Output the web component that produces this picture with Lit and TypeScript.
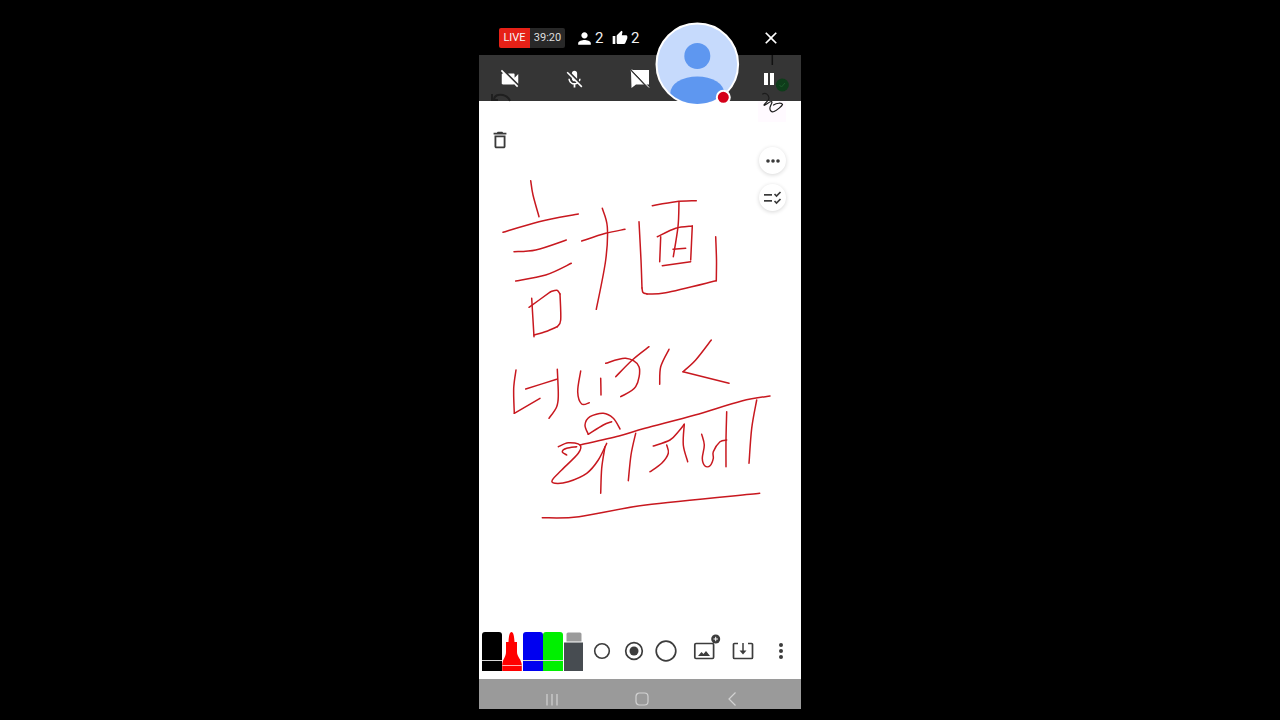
import { LitElement, html, css, svg } from "lit";
import { customElement } from "lit/decorators.js";

type P = number[];
const STROKES: P[] = [
  [530.7,180.7,533,195,539,216.7],
  [503,232.3,539,221.7,578.3,214],
  [514,251.7,535.7,250,566.3,240],
  [515.7,281,545.7,275,571.3,263.3],
  [531.7,298.3,534,336.7],
  [529,307.3,550.7,291.7],
  [550.7,291.7,557,290.2,560,294],
  [560,294,560.7,320,557.3,326.7],
  [557.3,326.7,546,331.5,534,335],
  [602.3,208.3,607.3,226.7,605.7,260,596.3,309.3],
  [581.7,241,605.7,233.3,625,229.3],
  [639,221.7,641,260,642,288],
  [642,288,643,292.5,647,294],
  [647,294,665.7,292.7,716.3,280.7],
  [716.3,280.7,716.5,260,715.7,236.7],
  [652.3,205.7,675.7,201.7,696.3,200.7],
  [679,201.7,678,226.7,673.3,256.7],
  [657.3,236.7,675.7,228.3,692.3,226],
  [660.7,236.7,659.7,261.7],
  [692.3,226,690.7,260],
  [662.3,265.7,690.7,261.7],
  [673,249.3,685.7,248.3],
  [516,370,513.7,388.3,514.3,413.3],
  [514.3,413.3,540,398.3],
  [525.7,389,556.7,379.3],
  [557.3,369.3,558.3,395,556.7,406.7,549,418.3],
  [580.7,371,577.7,391.7,581.7,404,589.3,402.7],
  [600.7,378.3,601,395],
  [605.7,363.3,625.7,358.3,639,366.7,635.7,386.7,620.7,396.7],
  [615.7,376.7,632.3,360,649,346.7],
  [669,349.3,660.7,366.7,659.7,384.3],
  [711.3,340,695.7,360,683,371.7],
  [683,371.7,729,383.3],
  [580,445,619,436,645,428.3,695,415,741.7,401,770,396],
  [620,429,613.3,418.3,603.3,413.3,590,416.7,585,425,588.3,434.3],
  [588.3,434.3,603.3,425,611.7,421.7],
  [558.3,446.7,568.3,442.7,580,445,578.3,453.3,561.7,470,552.3,480,555,483.3,568.3,481.7,586.7,473.3,598.3,460,606.7,443.3],
  [576.7,446.7,566.7,448.3,562.3,451.7,566.7,455],
  [605,446.7,601.7,468.3,600.7,493.3],
  [635.7,433.3,631,455,628.3,480.7],
  [653.3,446,670,440,678.3,431.7,684.3,424.3],
  [684.3,424.3,683.3,445,687.7,461.7],
  [666.7,445,668.3,453.3,661.7,463.3,650,471.7],
  [701.7,434.3,704.3,445,702.3,458.3,705,466,710,465.7,713.3,458.3,713.3,451.7,720,441.7,726.7,440],
  [726.7,411.7,726,440,726,466.7],
  [756.7,400,751.7,428.3,749,463.3],
  [542.3,517.7,579,516.7,645.7,505,759.7,493.3],
];

function smooth(a: P): string {
  const n = a.length / 2;
  const p = (i: number) => {
    const k = Math.max(0, Math.min(n - 1, i));
    return [a[k * 2], a[k * 2 + 1]];
  };
  let d = `M${a[0]} ${a[1]}`;
  for (let i = 0; i < n - 1; i++) {
    const [x0, y0] = p(i - 1), [x1, y1] = p(i), [x2, y2] = p(i + 1), [x3, y3] = p(i + 2);
    const c1x = x1 + (x2 - x0) / 6, c1y = y1 + (y2 - y0) / 6;
    const c2x = x2 - (x3 - x1) / 6, c2y = y2 - (y3 - y1) / 6;
    d += `C${c1x.toFixed(1)} ${c1y.toFixed(1)} ${c2x.toFixed(1)} ${c2y.toFixed(1)} ${x2} ${y2}`;
  }
  return d;
}

const MARKERS = ["#000000", "#ff0000", "#0000f0", "#00f000"];

@customElement("app-root")
export class AppRoot extends LitElement {
  static styles = css`
    :host { display: flex; justify-content: center; width: 1280px; height: 720px; background: #000; overflow: hidden; font-family: Roboto, "Liberation Sans", sans-serif; }
    .phone { position: relative; width: 322px; height: 720px; display: flex; flex-direction: column; }
    .top { height: 55px; flex: none; display: flex; align-items: center; padding: 21px 0 0 20px; box-sizing: border-box; color: #fff; background: #000; }
    .badge { display: flex; height: 20px; border-radius: 2px; overflow: hidden; font-size: 11px; line-height: 20px; }
    .live { width: 31px; background: #e62117; text-align: center; color: #f6f6f6; }
    .time { width: 35px; background: #282828; text-align: center; color: #dedede; }
    .stat { display: flex; align-items: center; font-size: 15px; color: #f2f2f2; }
    .stat svg { fill: #fff; display: block; }
    .s1 { margin-left: 10px; gap: 1px; }
    .s2 { margin-left: 9px; gap: 2.5px; }
    .close { margin-left: auto; margin-right: 20px; fill: #fff; display: block; }
    .bar { height: 46px; flex: none; background: #353535; display: flex; align-items: center; padding-top: 2px; box-sizing: border-box; padding-right: 27px; }
    .cell { width: 61px; margin-right: 4px; display: flex; justify-content: center; }
    .cell svg { display: block; fill: #fff; }
    .pause { margin-left: auto; display: flex; gap: 2px; }
    .pause i { display: block; width: 4px; height: 12px; background: #fff; }
    .canvas { flex: 1; background: #fff; display: flex; flex-direction: column; position: relative; }
    .head { display: flex; justify-content: space-between; padding: 28px 15px 0 10px; }
    .trash { display: block; fill: #3a3a3a; }
    .side { display: flex; flex-direction: column; gap: 10px; margin-top: 18px; }
    .round { width: 27px; height: 27px; border-radius: 50%; background: #fff; box-shadow: 0 1px 4px rgba(0,0,0,.16); display: flex; align-items: center; justify-content: center; }
    .round svg { display: block; fill: #3a3a3a; }
    .tools { margin-top: auto; display: flex; align-items: flex-end; padding: 0 0 8px 3px; height: 40px; }
    .marker { display: block; width: 20px; height: 39px; margin-right: 0.4px; flex: none; }
    .tool { display: flex; align-items: center; justify-content: center; height: 38px; margin-bottom: 1px; flex: none; }
    .tool svg { display: block; fill: none; stroke: #3c3c3c; overflow: visible; }
    .nav { height: 30px; flex: none; background: #9a9a9a; display: flex; align-items: center; padding-top: 10px; box-sizing: border-box; }
    .navi { display: flex; align-items: center; justify-content: center; flex: none; }
    .navi svg { display: block; fill: none; stroke: #d2d2d2; stroke-width: 1.2; }
    .foot { height: 11px; flex: none; background: #000; }
    .overlay { position: absolute; left: 0; top: 0; width: 322px; height: 720px; pointer-events: none; }
    .ink { fill: none; stroke: #c8181f; stroke-width: 1.5; stroke-linecap: round; stroke-linejoin: round; }
    .sq { fill: none; stroke: #1c1c1c; stroke-width: 1.2; stroke-linecap: round; stroke-linejoin: round; }
    .ghost { fill: none; stroke: #1f1f1f; stroke-width: 2; }
  `;

  private marker(c: string, i: number) {
    if (i === 1) {
      return svg`<svg class="marker" viewBox="0 0 20 39">
        <path d="M9.500 0c1.800 0 2.800 4 3 10h2.500v10c0 5 4.500 7 4.800 13v6H.2v-6C.5 27 4 25 4 20V10h2.500C6.700 4 7.700 0 9.500 0z" fill="${c}"/>
        <rect x=".2" y="33" width="19.600" height="1" fill="#ffb0b0"/>
      </svg>`;
    }
    return svg`<svg class="marker" viewBox="0 0 20 39">
      <path d="M3 0h14a3 3 0 0 1 3 3v36H0V3a3 3 0 0 1 3-3z" fill="${c}"/>
      <rect y="28" width="20" height="1" fill="#d8d8d8"/>
    </svg>`;
  }

  render() {
    return html`<div class="phone">
      <div class="top">
        <div class="badge"><div class="live">LIVE</div><div class="time">39:20</div></div>
        <div class="stat s1">
          <svg width="19" height="19" viewBox="0 0 24 24"><path d="M12 12c2.210 0 4-1.790 4-4s-1.790-4-4-4-4 1.790-4 4 1.790 4 4 4zm0 2c-2.670 0-8 1.340-8 4v2h16v-2c0-2.660-5.330-4-8-4z"/></svg>
          <span>2</span>
        </div>
        <div class="stat s2">
          <svg width="16" height="16" viewBox="0 0 24 24"><path d="M1 21h4V9H1v12zm22-11c0-1.100-.9-2-2-2h-6.310l.95-4.570.03-.32c0-.41-.17-.79-.44-1.060L14.170 1 7.590 7.590C7.220 7.950 7 8.450 7 9v10c0 1.100.9 2 2 2h9c.83 0 1.540-.5 1.840-1.220l3.020-7.050c.09-.23.14-.47.14-.73v-2z"/></svg>
          <span>2</span>
        </div>
        <svg class="close" width="20" height="20" viewBox="0 0 24 24"><path d="M19 6.410L17.590 5 12 10.590 6.410 5 5 6.410 10.590 12 5 17.590 6.410 19 12 13.410 17.590 19 19 17.590 13.410 12z"/></svg>
      </div>
      <div class="bar">
        <div class="cell"><svg width="22" height="22" viewBox="0 0 24 24"><path d="M21 6.500l-4 4V7c0-.55-.45-1-1-1H9.820L21 17.180V6.500zM3.270 2L2 3.270 4.730 6H4c-.55 0-1 .45-1 1v10c0 .55.45 1 1 1h12c.21 0 .39-.08.54-.18L19.730 21 21 19.730 3.270 2z"/></svg></div>
        <div class="cell"><svg width="21" height="21" viewBox="0 0 24 24"><path d="M19 11h-1.700c0 .74-.16 1.430-.43 2.050l1.230 1.230c.56-.98.9-2.090.9-3.280zm-4.020.17c0-.06.02-.11.02-.17V5c0-1.660-1.340-3-3-3S9 3.340 9 5v.18l5.980 5.990zM4.270 3L3 4.270l6.010 6.010V11c0 1.660 1.330 3 2.990 3 .22 0 .44-.03.65-.08l1.660 1.660c-.71.33-1.500.52-2.310.52-2.760 0-5.300-2.100-5.300-5.100H5c0 3.410 2.720 6.230 6 6.720V21h2v-3.280c.91-.13 1.770-.45 2.540-.9L19.730 21 21 19.730 4.270 3z"/></svg></div>
        <div class="cell"><svg width="20" height="20" viewBox="0 0 20 20"><path d="M1 3.500L.5 1h18.500v14.500H6L1.500 19z"/><path d="M.5 .5L17.500 18.500" stroke="#353535" stroke-width="1.500"/><path d="M2 .5L19 18.500" stroke="#fff" stroke-width="1"/></svg></div>
        <div class="pause"><i></i><i></i></div>
      </div>
      <div class="canvas">
        <div class="head">
          <svg class="trash" width="22" height="22" viewBox="0 0 24 24"><path d="M16 9v10H8V9h8m-1.500-6h-5l-1 1H5v2h14V4h-3.500l-1-1zM18 7H6v12c0 1.100.9 2 2 2h8c1.100 0 2-.9 2-2V7z"/></svg>
          <div class="side">
            <div class="round"><svg width="16" height="6" viewBox="0 0 16 6"><circle cx="3" cy="3" r="1.800"/><circle cx="8" cy="3" r="1.800"/><circle cx="13" cy="3" r="1.800"/></svg></div>
            <div class="round"><svg width="20" height="14" viewBox="0 0 20 14"><rect x="1" y="3" width="8" height="1.700"/><rect x="1" y="9" width="8" height="1.700"/><path d="M11.500 3l2 2 4-4M11.500 10l2 2 4-4" fill="none" stroke="#3a3a3a" stroke-width="1.700"/></svg></div>
          </div>
        </div>
        <div class="tools">
          ${MARKERS.map((c, i) => this.marker(c, i))}
          <svg class="marker" viewBox="0 0 20 39">
            <path d="M2.500 2a1.500 1.500 0 0 1 1.500-1.500h12a1.500 1.500 0 0 1 1.500 1.500V9.500H2.500z" fill="#9b9b9b"/>
            <rect y="10.500" width="19" height="28.500" fill="#474c51"/>
          </svg>
          <div class="tool" style="width:36.600px"><svg width="18" height="18" viewBox="0 0 18 18"><circle cx="9" cy="9" r="7.300" stroke-width="1.600"/></svg></div>
          <div class="tool" style="width:27.400px"><svg width="20" height="20" viewBox="0 0 20 20"><circle cx="10" cy="10" r="8.300" stroke-width="1.700"/><circle cx="10" cy="10" r="4.500" fill="#3c3c3c" stroke="none"/></svg></div>
          <div class="tool" style="width:36px"><svg width="24" height="24" viewBox="0 0 24 24"><circle cx="12" cy="12" r="9.800" stroke-width="1.700"/></svg></div>
          <div class="tool" style="width:40px"><svg width="26" height="26" viewBox="0 0 26 26">
            <rect x="3.800" y="5.500" width="18.800" height="15" rx="1.200" stroke-width="1.700"/>
            <path d="M7 18l3.500-4 2 2 2.500-3 4 5z" fill="#3c3c3c" stroke="none"/>
            <circle cx="24.700" cy="1" r="4.500" fill="#3c3c3c" stroke="none"/>
            <path d="M22.500 1h4.400M24.700 -1.200v4.400" stroke="#fff" stroke-width="1"/>
          </svg></div>
          <div class="tool" style="width:37.400px"><svg width="22" height="18" viewBox="0 0 22 18">
            <path d="M6 1.500H2.500a1 1 0 0 0-1 1v13a1 1 0 0 0 1 1h17a1 1 0 0 0 1-1v-13a1 1 0 0 0-1-1H16" stroke-width="1.700"/>
            <path d="M11 1v9" stroke-width="1.500"/><path d="M7.500 8.500h7L11 12.500z" fill="#3c3c3c" stroke="none"/>
          </svg></div>
          <div class="tool" style="width:39.200px"><svg width="6" height="18" viewBox="0 0 6 18"><g fill="#3c3c3c" stroke="none"><circle cx="3" cy="3" r="2"/><circle cx="3" cy="9" r="2"/><circle cx="3" cy="15" r="2"/></g></svg></div>
        </div>
      </div>
      <div class="nav">
        <div class="navi" style="width:145px"><svg width="14" height="13" viewBox="0 0 14 13"><path d="M2 1v11.500M7 1v11.500M12 1v11.500"/></svg></div>
        <div class="navi" style="width:35px"><svg width="14" height="14" viewBox="0 0 14 14"><rect x="1" y="1" width="12" height="12" rx="3.500"/></svg></div>
        <div class="navi" style="width:146px"><svg width="10" height="16" viewBox="0 0 10 16"><path d="M8.500 1.500L2 8l6.500 6.500"/></svg></div>
      </div>
      <div class="foot"></div>

      <svg class="overlay" viewBox="479 0 322 720">
        ${STROKES.map((s) => svg`<path class="ink" d="${smooth(s)}"/>`)}
        <path class="ghost" d="M494 100c0-5 5-6 9-5 4 1 6 3 7 6M492 94v6h6"/>
        <path d="M772.300 55v10" stroke="#111" stroke-width="1.500"/>
        <circle cx="782.300" cy="85" r="6.500" fill="#0e3d1a"/>
        <path d="M779.500 85l2 2 3.500-4" fill="none" stroke="#1d5c2c" stroke-width="1"/>
        <rect x="758" y="101.500" width="28" height="20.500" fill="#fffaff"/>
        <path class="sq" d="M762.700 94c3-2 6 1 6.300 4 .2 3-4.500 5-5 7 .5 1.500 5-3.500 7.500-3.500 1.500 .5-1 3.500-1.500 6-.5 3 1.500 5 4 4 3-1.200 8-5.500 8.500-7-.5-2-6-1.500-9 .5"/>
        <circle cx="697.300" cy="64.300" r="40.800" fill="#c6dafc" stroke="#fff" stroke-width="2"/>
        <circle cx="697.300" cy="56" r="13" fill="#5e97f0"/>
        <clipPath id="av"><circle cx="697.300" cy="64.300" r="39.800"/></clipPath>
        <ellipse cx="697.300" cy="93" rx="27" ry="16.500" fill="#5e97f0" clip-path="url(#av)"/>
        <circle cx="723.300" cy="97.300" r="6.500" fill="#d50019" stroke="#fff" stroke-width="2"/>
      </svg>
    </div>`;
  }
}
